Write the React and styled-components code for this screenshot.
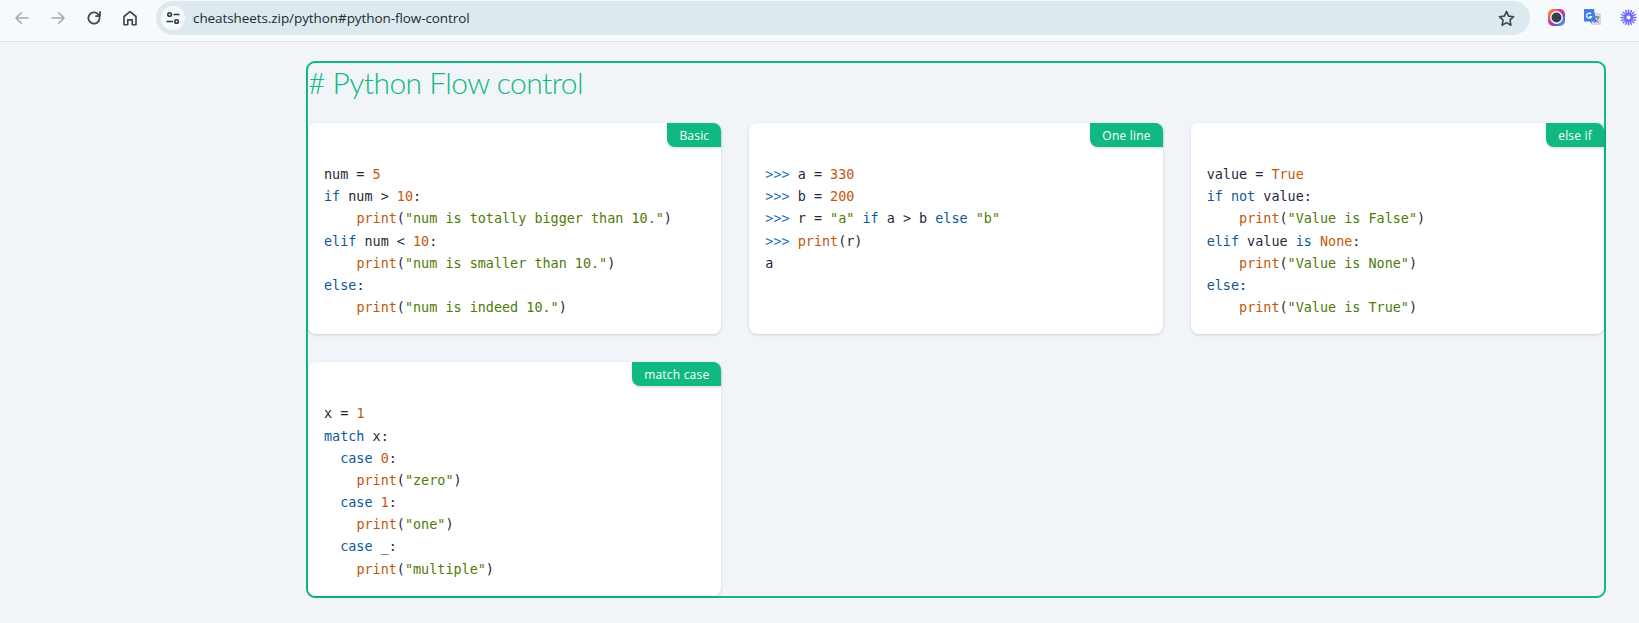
import React from "react";
import styled, { createGlobalStyle } from "styled-components";

const Global = createGlobalStyle`
  html, body { margin: 0; padding: 0; background: #f1f5f9; height: 623px; overflow: hidden; }
`;

const Toolbar = styled.header`
  height: 41px;
  box-sizing: content-box;
  border-bottom: 1px solid #dfe3e6;
  background: #f6fafd;
  display: flex;
  align-items: flex-start;
  padding-left: 4px;
`;
const NavButton = styled.span`
  flex: none;
  width: 36px;
  height: 36px;
  display: flex;
  align-items: center;
  justify-content: center;
  color: ${(p) => (p.$dim ? "#a4a9ad" : "#3f484c")};
`;
const Omnibox = styled.div`
  flex: none;
  margin: 1px 0 0 8px;
  width: 1374px;
  height: 34px;
  border-radius: 17px;
  background: #dce9ee;
  display: flex;
  align-items: center;
  padding: 0 14px 0 5px;
  box-sizing: border-box;
  color: #3f484c;
`;
const SiteChip = styled.span`
  width: 24px;
  height: 24px;
  border-radius: 50%;
  background: #f6fafd;
  display: flex;
  align-items: center;
  justify-content: center;
  color: #30383c;
`;
const Url = styled.span`
  margin-left: 8px;
  flex: 1;
  font: 13.5px "Open Sans", "Noto Sans", sans-serif;
  letter-spacing: -0.08px;
  color: #222b30;
`;
const Extensions = styled.div`
  flex: none;
  display: flex;
  align-items: center;
  margin: 9px 0 0 18px;
  gap: 19px;
`;
const Main = styled.main`
  padding: 19px 0 0 306px;
`;
const Frame = styled.section`
  box-sizing: border-box;
  width: 1300px;
  height: 537px;
  border: 2px solid #10b981;
  border-radius: 9px;
`;
const Title = styled.h1`
  margin: 0;
  height: 60px;
  font: 300 30px/39px Lato, "Open Sans", sans-serif;
  letter-spacing: -0.55px;
  color: #10b981;
`;
const Grid = styled.div`
  display: grid;
  grid-template-columns: repeat(3, 1fr);
  gap: 28px;
`;
const Card = styled.article`
  position: relative;
  background: #fff;
  border-radius: 8px;
  box-shadow: 0 1px 3px rgba(15, 23, 42, 0.16);
  padding: 41px 16px 15px;
`;
const Tag = styled.span`
  position: absolute;
  top: 0;
  right: 0;
  height: 24px;
  padding: 0 12px;
  display: flex;
  align-items: center;
  background: #10b981;
  color: #fff;
  font: 12px "Open Sans", "Noto Sans", sans-serif;
  letter-spacing: 0.2px;
  border-radius: 0 8px 0 8px;
  box-shadow: 0 1px 3px rgba(15, 23, 42, 0.18);
`;
const Code = styled.div`
  font: 13.45px/22.2px "DejaVu Sans Mono", "Liberation Mono", monospace;
  color: #1e293b;
`;
const Line = styled.div`
  white-space: pre;
  height: 22.2px;
  padding-left: ${(p) => (p.$indent || 0) * 8.1}px;
`;
const K = styled.span`color: #0a5a97;`;
const N = styled.span`color: #c2570c;`;
const S = styled.span`color: #4f7a06;`;
const P = styled.span`color: #1b6fb5;`;

const Icon = ({ children, size = 18, vb = 24, sw = 2 }) => (
  <svg width={size} height={size} viewBox={`0 0 ${vb} ${vb}`} fill="none" stroke="currentColor" strokeWidth={sw} strokeLinecap="round" strokeLinejoin="round">
    {children}
  </svg>
);

const Call = ({ arg }) => (
  <Line $indent={4}>
    <N>print</N>(<S>{arg}</S>)
  </Line>
);

function ChromeBar() {
  return (
    <Toolbar>
      <NavButton $dim><Icon><path d="M20 12H4M11 5l-7 7 7 7" /></Icon></NavButton>
      <NavButton $dim><Icon><path d="M4 12h16M13 5l7 7-7 7" /></Icon></NavButton>
      <NavButton><Icon sw={2.4}><path d="M19.5 12a7.5 7.5 0 1 1-2.2-5.3L20 9.4M20 4v5.4h-5.4" /></Icon></NavButton>
      <NavButton><Icon sw={2.2}><path d="M4 21V10l8-6.5 8 6.5v11h-5v-6.5H9V21z" /></Icon></NavButton>
      <Omnibox>
        <SiteChip>
          <svg width="14" height="14" viewBox="0 0 14 14" fill="none" stroke="currentColor" strokeWidth="1.6">
            <circle cx="3.6" cy="3.5" r="1.8" />
            <path d="M7.5 3.5H13.5M.5 10.5H7" />
            <circle cx="10.6" cy="10.5" r="1.8" />
          </svg>
        </SiteChip>
        <Url>cheatsheets.zip/python#python-flow-control</Url>
        <Icon size={19} sw={2}><path d="M12 3l2.7 6 6.3.7-4.7 4.3 1.3 6.5L12 17.2 6.4 20.5 7.7 14 3 9.7 9.3 9z" /></Icon>
      </Omnibox>
      <Extensions>
        <svg width="17" height="17" viewBox="0 0 17 17">
          <defs>
            <linearGradient id="ring" x1="0" y1="0" x2="1" y2="1">
              <stop offset="0" stopColor="#f5b02e" />
              <stop offset=".35" stopColor="#ef3f6e" />
              <stop offset=".65" stopColor="#8b3fe0" />
              <stop offset="1" stopColor="#2bc7d9" />
            </linearGradient>
          </defs>
          <rect width="17" height="17" rx="5" fill="url(#ring)" />
          <circle cx="8.5" cy="8.5" r="6.4" fill="#fff" />
          <circle cx="8.5" cy="8.5" r="5" fill="#37424f" />
        </svg>
        <svg width="17" height="17" viewBox="0 0 17 17">
          <rect x="7" y="4" width="10" height="12" fill="#d8d9da" />
          <path d="M9.5 8h6M12.5 7v1.5M14.5 8c-.6 3-2.4 4.6-4.5 5.5M10.8 9.6c.7 1.6 2 3 3.8 3.8" stroke="#6b6e72" strokeWidth="1" fill="none" />
          <path d="M0 0h10l2 12.5H7.2l1 2.5-2.6-2.5H0z" fill="#3f7de8" />
          <path d="M7.2 5a2.6 2.6 0 1 0 .4 2.6H5.2" stroke="#fff" strokeWidth="1.2" fill="none" />
        </svg>
        <svg width="17" height="17" viewBox="0 0 17 17" stroke="#6f6af8" strokeLinecap="round">
          <path d="M8.5 1v15M1 8.5h15M3.2 3.2l10.6 10.6M13.8 3.2L3.2 13.8M5.6 1.6l5.8 13.8M11.4 1.6L5.6 15.4M1.6 5.6l13.8 5.8M15.4 5.6L1.6 11.4" strokeWidth="1.5" />
          <circle cx="8.5" cy="8.5" r="3" fill="#f6fafd" strokeWidth="2" />
        </svg>
      </Extensions>
    </Toolbar>
  );
}

export default function App() {
  return (
    <>
      <Global />
      <ChromeBar />
      <Main>
        <Frame>
          <Title># Python Flow control</Title>
          <Grid>
            <Card>
              <Tag>Basic</Tag>
              <Code>
                <Line>num = <N>5</N></Line>
                <Line><K>if</K> num &gt; <N>10</N>:</Line>
                <Call arg={'"num is totally bigger than 10."'} />
                <Line><K>elif</K> num &lt; <N>10</N>:</Line>
                <Call arg={'"num is smaller than 10."'} />
                <Line><K>else</K>:</Line>
                <Call arg={'"num is indeed 10."'} />
              </Code>
            </Card>
            <Card>
              <Tag>One line</Tag>
              <Code>
                <Line><P>{">>>"}</P> a = <N>330</N></Line>
                <Line><P>{">>>"}</P> b = <N>200</N></Line>
                <Line><P>{">>>"}</P> r = <S>"a"</S> <K>if</K> a &gt; b <K>else</K> <S>"b"</S></Line>
                <Line><P>{">>>"}</P> <N>print</N>(r)</Line>
                <Line>a</Line>
              </Code>
            </Card>
            <Card>
              <Tag>else if</Tag>
              <Code>
                <Line>value = <N>True</N></Line>
                <Line><K>if not</K> value:</Line>
                <Call arg={'"Value is False"'} />
                <Line><K>elif</K> value <K>is</K> <N>None</N>:</Line>
                <Call arg={'"Value is None"'} />
                <Line><K>else</K>:</Line>
                <Call arg={'"Value is True"'} />
              </Code>
            </Card>
            <Card>
              <Tag>match case</Tag>
              <Code>
                <Line>x = <N>1</N></Line>
                <Line><K>match</K> x:</Line>
                <Line $indent={2}><K>case</K> <N>0</N>:</Line>
                <Call arg={'"zero"'} />
                <Line $indent={2}><K>case</K> <N>1</N>:</Line>
                <Call arg={'"one"'} />
                <Line $indent={2}><K>case</K> _:</Line>
                <Call arg={'"multiple"'} />
              </Code>
            </Card>
          </Grid>
        </Frame>
      </Main>
    </>
  );
}
